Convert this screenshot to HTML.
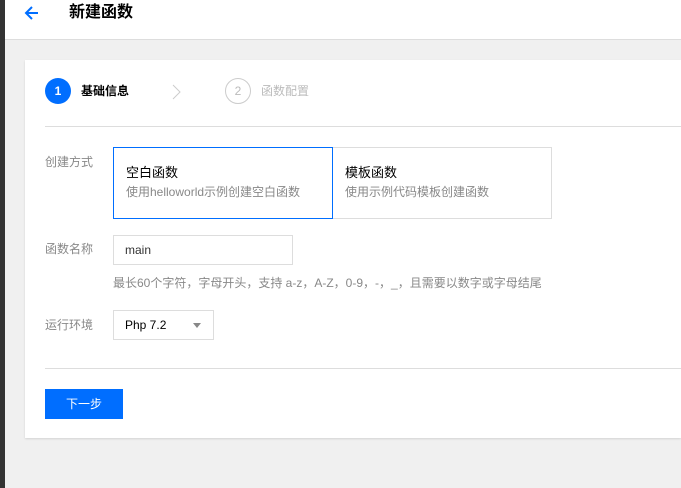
<!DOCTYPE html>
<html><head><meta charset="utf-8"><style>
*{margin:0;padding:0;box-sizing:border-box}
body{width:681px;height:488px;overflow:hidden;background:#f0f0f0;font-family:"Liberation Sans","Noto Sans CJK SC",sans-serif;position:relative;font-size:12px;color:#333}
.a{position:absolute}
.lbl{color:#888;font-size:12px;line-height:14px}
</style></head><body>
<div class="a" style="left:0;top:0;width:5px;height:488px;background:#333"></div>
<div class="a" style="left:5px;top:0;right:0;height:40px;background:#fff;border-bottom:1px solid #ddd"></div>
<svg class="a" style="left:24px;top:5px" width="16" height="16" viewBox="0 0 16 16"><path d="M14 8H2M8 2L2 8l6 6" fill="none" stroke="#006eff" stroke-width="2"/></svg>
<div class="a" style="left:69px;top:3px;font-size:16px;font-weight:bold;color:#000;line-height:20px">新建函数</div>
<div class="a" style="left:25px;top:60px;right:0;height:378px;background:#fff;box-shadow:0 1px 2px rgba(0,0,0,.12)"></div>
<div class="a" style="left:45px;top:78px;width:26px;height:26px;border-radius:50%;background:#006eff;color:#fff;font-size:12px;font-weight:bold;text-align:center;line-height:26px">1</div>
<div class="a" style="left:81px;top:84px;font-size:12px;font-weight:bold;color:#000;line-height:14px">基础信息</div>
<svg class="a" style="left:170px;top:83px" width="12" height="18"><path d="M3 2l7 7-7 7" fill="none" stroke="#ccc" stroke-width="1"/></svg>
<div class="a" style="left:225px;top:78px;width:26px;height:26px;border-radius:50%;border:1px solid #ccc;color:#bbb;font-size:12px;text-align:center;line-height:24px">2</div>
<div class="a" style="left:261px;top:84px;color:#bbb;line-height:14px">函数配置</div>
<div class="a" style="left:45px;top:126px;right:0;height:1px;background:#ddd"></div>
<div class="a lbl" style="left:45px;top:155px">创建方式</div>
<div class="a" style="left:332px;top:147px;width:220px;height:72px;border:1px solid #ddd"></div>
<div class="a" style="left:113px;top:147px;width:220px;height:72px;border:1px solid #006eff"></div>
<div class="a" style="left:126px;top:165px;font-size:13px;color:#000;line-height:15px">空白函数</div>
<div class="a lbl" style="left:126px;top:185px">使用helloworld示例创建空白函数</div>
<div class="a" style="left:345px;top:165px;font-size:13px;color:#000;line-height:15px">模板函数</div>
<div class="a lbl" style="left:345px;top:185px">使用示例代码模板创建函数</div>
<div class="a lbl" style="left:45px;top:242px">函数名称</div>
<div class="a" style="left:113px;top:235px;width:180px;height:30px;border:1px solid #ddd;padding-left:11px;line-height:28px;color:#333">main</div>
<div class="a lbl" style="left:113px;top:276px">最长60个字符，字母开头，支持 a-z，A-Z，0-9，-，_，且需要以数字或字母结尾</div>
<div class="a lbl" style="left:45px;top:318px">运行环境</div>
<div class="a" style="left:113px;top:310px;width:101px;height:30px;border:1px solid #ddd;padding-left:11px;line-height:28px;color:#000">Php 7.2</div>
<div class="a" style="left:193px;top:323px;width:0;height:0;border-left:4px solid transparent;border-right:4px solid transparent;border-top:5px solid #888"></div>
<div class="a" style="left:45px;top:368px;right:0;height:1px;background:#ddd"></div>
<div class="a" style="left:45px;top:389px;width:78px;height:30px;background:#006eff;color:#fff;text-align:center;line-height:30px">下一步</div>
</body></html>
